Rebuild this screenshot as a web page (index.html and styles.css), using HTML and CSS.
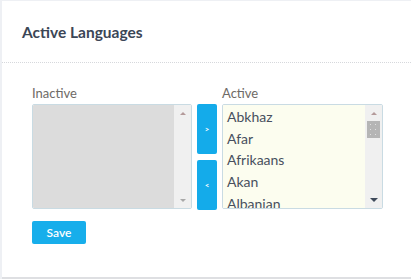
FILE: index.html
```html
<!DOCTYPE html>
<html lang="en">
<head>
  <meta charset="UTF-8">
  <title>Active Languages</title>
  <link rel="stylesheet" href="styles.css">
</head>
<body>

<div class="card">
  <div class="card-header">
    <h3>Active Languages</h3>
  </div>

  <div class="card-body">
    <div class="picker">
      <div class="column">
        <label>Inactive</label>
        <div class="listbox inactive">
          <div class="items"></div>
          <div class="scrollbar">
            <span class="arrow-up"></span>
            <span class="arrow-down"></span>
          </div>
        </div>
      </div>

      <div class="moves">
        <button class="move">&gt;</button>
        <button class="move">&lt;</button>
      </div>

      <div class="column">
        <label>Active</label>
        <div class="listbox active">
          <div class="items">
            <div class="item">Abkhaz</div>
            <div class="item">Afar</div>
            <div class="item">Afrikaans</div>
            <div class="item">Akan</div>
            <div class="item">Albanian</div>
          </div>
          <div class="scrollbar">
            <span class="arrow-up"></span>
            <span class="thumb"></span>
            <span class="arrow-down dark"></span>
          </div>
        </div>
      </div>
    </div>

    <button class="save">Save</button>
  </div>
</div>

</body>
</html>
```

FILE: styles.css
```css
* {
  box-sizing: border-box;
  font-family: Lato, "Open Sans", sans-serif;
}

body {
  margin: 0;
  background-color: #eef0f4;
  height: 279px;
  overflow: hidden;
}

.card {
  background: #fff;
  margin: 1px 0 0 2px;
  height: 278px;
  border-bottom: 2px solid #dedfe2;
}

.card-header {
  height: 62px;
  padding: 0 20px;
  display: flex;
  align-items: center;
  border-bottom: 1px dotted #d6d8dc;
}

h3 {
  margin: 0;
  font-size: 15.5px;
  font-weight: 700;
  color: #3b4656;
}

.card-body {
  padding: 22px 30px 0;
}

.picker {
  display: flex;
  gap: 5px;
}

.column {
  display: flex;
  flex-direction: column;
}

label {
  display: block;
  font-size: 13px;
  line-height: 17px;
  color: #6e6a66;
  margin-bottom: 2px;
}

.listbox {
  display: flex;
  height: 105px;
  border: 1px solid #c9dbe3;
  border-radius: 2px;
  overflow: hidden;
}

.inactive {
  width: 160px;
}

.active {
  width: 161px;
}

.inactive .items {
  background: #dcdcdc;
}

.active .items {
  background: #fcfdef;
}

.items {
  flex: 1;
  padding: 1px 4px 0;
  overflow: hidden;
}

.item {
  font-size: 14px;
  line-height: 21.7px;
  color: #48505e;
}

.scrollbar {
  width: 17px;
  background: #f0f0f0;
  display: flex;
  flex-direction: column;
  align-items: center;
  padding: 7px 0 6px;
}

.arrow-up {
  width: 0;
  height: 0;
  border-left: 3px solid transparent;
  border-right: 3px solid transparent;
  border-bottom: 3px solid #b49a9a;
}

.arrow-down {
  width: 0;
  height: 0;
  margin-top: auto;
  border-left: 3px solid transparent;
  border-right: 3px solid transparent;
  border-top: 3px solid #a8a8a8;
}

.arrow-down.dark {
  border-left-width: 4px;
  border-right-width: 4px;
  border-top: 4px solid #3f4a5a;
}

.thumb {
  width: 13px;
  height: 17px;
  margin-top: 6px;
  background-color: #b5b5b5;
  background-image: radial-gradient(#e0e0e0 0.6px, transparent 0.8px);
  background-size: 5px 5px;
  background-position: 1px 1px;
}

.moves {
  display: flex;
  flex-direction: column;
  gap: 6px;
  padding-top: 19px;
}

.move {
  width: 20px;
  height: 50px;
  border: none;
  border-radius: 2px;
  background: #14abea;
  color: #fff;
  font-size: 8px;
  font-weight: 700;
  padding: 0;
  cursor: pointer;
}

.save {
  margin-top: 11px;
  width: 54px;
  height: 23px;
  border: none;
  border-radius: 2px;
  background: #17aeeb;
  color: #fff;
  font-size: 12px;
  font-weight: 600;
  padding: 0;
  cursor: pointer;
}
```
